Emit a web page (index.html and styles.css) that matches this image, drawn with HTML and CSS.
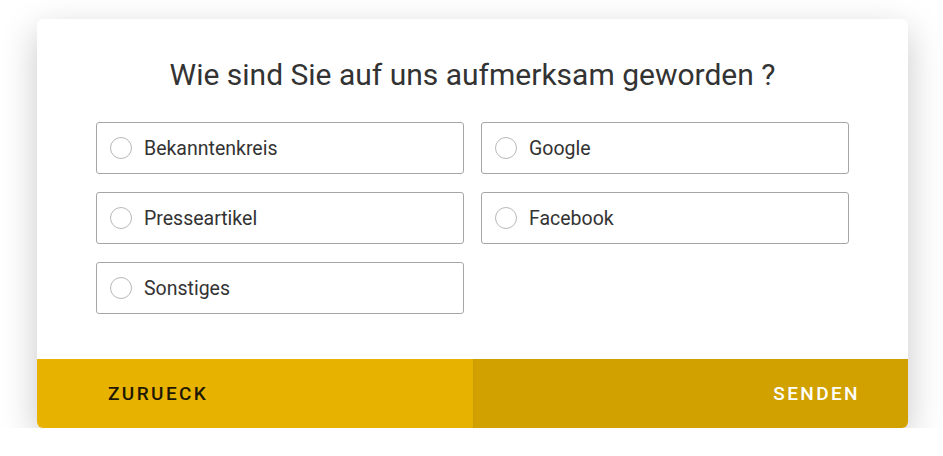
FILE: index.html
```html
<!DOCTYPE html>
<html lang="de">
<head>
    <meta charset="UTF-8">
    <meta name="viewport" content="width=device-width, initial-scale=1.0">
    <title>Umfrage</title>
    <link rel="stylesheet" href="styles.css">
</head>
<body>
    <div class="card">
        <div class="card-body">
            <h1>Wie sind Sie auf uns aufmerksam geworden ?</h1>
            <div class="options">
                <label class="option"><input type="radio" name="source"><span>Bekanntenkreis</span></label>
                <label class="option"><input type="radio" name="source"><span>Google</span></label>
                <label class="option"><input type="radio" name="source"><span>Presseartikel</span></label>
                <label class="option"><input type="radio" name="source"><span>Facebook</span></label>
                <label class="option"><input type="radio" name="source"><span>Sonstiges</span></label>
            </div>
        </div>
        <div class="card-footer">
            <button class="btn btn-back">ZURUECK</button>
            <button class="btn btn-send">SENDEN</button>
        </div>
    </div>
</body>
</html>
```

FILE: styles.css
```css
* {
    margin: 0;
    padding: 0;
    box-sizing: border-box;
    font-family: Roboto, 'Liberation Sans', Arial, sans-serif;
}

body {
    background-color: #ffffff;
    padding: 19px 35px 0 37px;
}

.card {
    width: 871px;
    background-color: #ffffff;
    border-radius: 6px;
    overflow: hidden;
    box-shadow: 0 12px 36px rgba(0, 0, 0, 0.22);
}

.card-body {
    padding: 38px 59px 45px;
}

h1 {
    text-align: center;
    font-size: 30px;
    font-weight: 400;
    color: #333333;
    line-height: 36px;
    margin-bottom: 29px;
}

.options {
    display: grid;
    grid-template-columns: 1fr 1fr;
    column-gap: 17px;
    row-gap: 18px;
}

.option {
    display: flex;
    align-items: center;
    height: 52px;
    padding: 0 13px;
    border: 1px solid #a6a6a6;
    border-radius: 3px;
    cursor: pointer;
}

.option input {
    appearance: none;
    width: 22px;
    height: 22px;
    border: 1px solid #b8b8b8;
    border-radius: 50%;
    margin-right: 12px;
    flex-shrink: 0;
}

.option span {
    font-size: 19.5px;
    color: #333333;
}

.card-footer {
    display: grid;
    grid-template-columns: 1fr 1fr;
    height: 69px;
}

.btn {
    border: none;
    font-size: 19px;
    font-weight: 500;
    letter-spacing: 2.4px;
    cursor: pointer;
}

.btn-back {
    background-color: #e8b200;
    color: #1e1800;
    text-align: left;
    padding-left: 71px;
}

.btn-send {
    background-color: #d1a100;
    color: #ffffff;
    text-align: right;
    padding-right: 48px;
    border-left: 1px solid #c99c06;
}
```
